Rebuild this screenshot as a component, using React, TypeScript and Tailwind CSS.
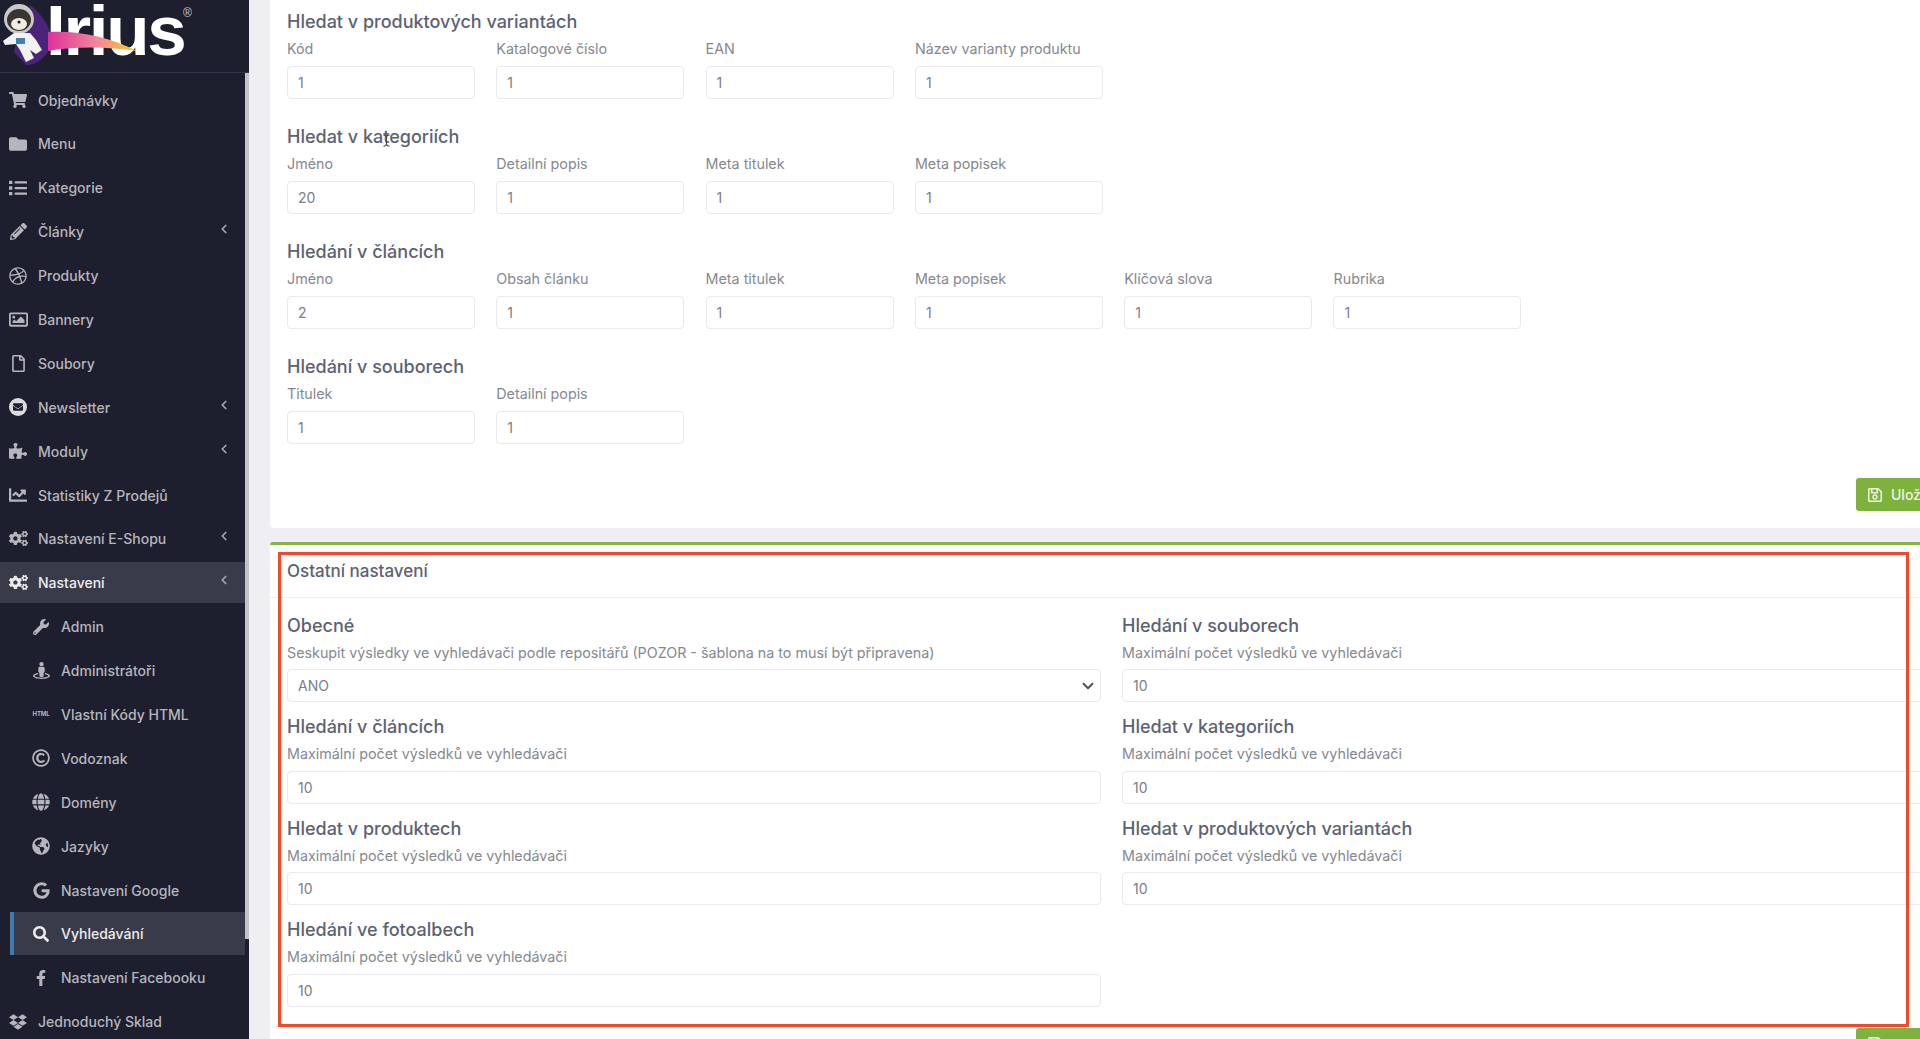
import React from "react";
import { ChevronLeft, ChevronDown, TextCursor } from "lucide-react";
import {
  FaShoppingCart,
  FaFolder,
  FaList,
  FaPencilAlt,
  FaDribbble,
  FaRegImage,
  FaRegFile,
  FaPuzzlePiece,
  FaChartLine,
  FaCogs,
  FaWrench,
  FaStreetView,
  FaRegCopyright,
  FaGlobe,
  FaGlobeAmericas,
  FaGoogle,
  FaSearch,
  FaFacebookF,
  FaDropbox,
  FaRegSave,
  FaEnvelope,
} from "react-icons/fa";

const FONT = "font-['Inter','Noto_Sans',sans-serif]";

type MenuItem = {
  label: string;
  icon: React.ReactNode;
  arrow?: boolean;
  sub?: boolean;
  active?: boolean;
  current?: boolean;
};

const MENU: MenuItem[] = [
  { label: "Objednávky", icon: <FaShoppingCart size={18} /> },
  { label: "Menu", icon: <FaFolder size={18} /> },
  { label: "Kategorie", icon: <FaList size={18} /> },
  { label: "Články", icon: <FaPencilAlt size={17} />, arrow: true },
  { label: "Produkty", icon: <FaDribbble size={18} /> },
  { label: "Bannery", icon: <FaRegImage size={19} /> },
  { label: "Soubory", icon: <FaRegFile size={17} /> },
  {
    label: "Newsletter",
    icon: (
      <span className="flex h-[18px] w-[18px] items-center justify-center rounded-full bg-[#dcdcdf] text-[#1e1f2e]">
        <FaEnvelope size={10} />
      </span>
    ),
    arrow: true,
  },
  { label: "Moduly", icon: <FaPuzzlePiece size={18} />, arrow: true },
  { label: "Statistiky Z Prodejů", icon: <FaChartLine size={18} /> },
  { label: "Nastavení E-Shopu", icon: <FaCogs size={19} />, arrow: true },
  { label: "Nastavení", icon: <FaCogs size={19} />, arrow: true, active: true },
  { label: "Admin", icon: <FaWrench size={16} />, sub: true },
  { label: "Administrátoři", icon: <FaStreetView size={17} />, sub: true },
  {
    label: "Vlastní Kódy HTML",
    icon: <span className="text-[6px] font-bold leading-none tracking-tight">HTML</span>,
    sub: true,
  },
  { label: "Vodoznak", icon: <FaRegCopyright size={18} />, sub: true },
  { label: "Domény", icon: <FaGlobe size={18} />, sub: true },
  { label: "Jazyky", icon: <FaGlobeAmericas size={18} />, sub: true },
  { label: "Nastavení Google", icon: <FaGoogle size={17} />, sub: true },
  { label: "Vyhledávání", icon: <FaSearch size={16} />, sub: true, current: true },
  { label: "Nastavení Facebooku", icon: <FaFacebookF size={16} />, sub: true },
  { label: "Jednoduchý Sklad", icon: <FaDropbox size={18} /> },
];

const TOP_SECTIONS = [
  {
    title: "Hledat v produktových variantách",
    fields: [
      ["Kód", "1"],
      ["Katalogové číslo", "1"],
      ["EAN", "1"],
      ["Název varianty produktu", "1"],
    ],
  },
  {
    title: "Hledat v kategoriích",
    fields: [
      ["Jméno", "20"],
      ["Detailní popis", "1"],
      ["Meta titulek", "1"],
      ["Meta popisek", "1"],
    ],
  },
  {
    title: "Hledání v článcích",
    fields: [
      ["Jméno", "2"],
      ["Obsah článku", "1"],
      ["Meta titulek", "1"],
      ["Meta popisek", "1"],
      ["Klíčová slova", "1"],
      ["Rubrika", "1"],
    ],
  },
  {
    title: "Hledání v souborech",
    fields: [
      ["Titulek", "1"],
      ["Detailní popis", "1"],
    ],
  },
];

const LIMIT_LABEL = "Maximální počet výsledků ve vyhledávači";

const OTHER_SECTIONS = [
  { title: "Hledání v souborech" },
  { title: "Hledání v článcích" },
  { title: "Hledat v kategoriích" },
  { title: "Hledat v produktech" },
  { title: "Hledat v produktových variantách" },
  { title: "Hledání ve fotoalbech" },
];

function Logo() {
  return (
    <div className="relative h-[73px] border-b border-[#34354a]">
      <span className="absolute left-[46px] top-[1px] font-['Liberation_Sans',sans-serif] text-[71px] font-bold leading-[60px] tracking-[-2.3px] text-white">
        Irius
      </span>
      <span className="absolute left-[183px] top-[6px] font-['Liberation_Sans',sans-serif] text-[12px] leading-[14px] text-[#c9c9cf]">
        ®
      </span>
      <svg className="absolute left-0 top-0" width="150" height="72" viewBox="0 0 150 72">
        <defs>
          <linearGradient id="swoosh" x1="0" y1="0" x2="1" y2="0">
            <stop offset="0" stopColor="#e0309a" />
            <stop offset="0.55" stopColor="#f2879a" />
            <stop offset="1" stopColor="#f5d020" />
          </linearGradient>
        </defs>
        <path d="M30 5 C40 12 48 24 50 32 L48 52 C42 60 34 66 26 65 L14 52 L20 24 Z" fill="#4b2379" />
        <path d="M48 32 C76 30 108 36 137 51 C108 47 78 46 48 51 Z" fill="url(#swoosh)" />
        <circle cx="19" cy="19" r="15" fill="#c9c9c9" />
        <ellipse cx="19" cy="20" rx="12" ry="11" fill="#3a3530" />
        <ellipse cx="19" cy="24" rx="8" ry="6" fill="#f0ebe3" />
        <circle cx="19" cy="22" r="1.5" fill="#1a1a1a" />
        <path d="M3 41 L14 33 L30 33 L36 40 L42 50 L36 54 L30 50 L34 58 L26 62 L20 50 L16 44 L5 45 Z" fill="#f2f2f2" />
        <rect x="16" y="38" width="9" height="6" fill="#3d7fb8" />
      </svg>
    </div>
  );
}

function NavRow({ item }: { item: MenuItem }) {
  const shape = item.current
    ? "-mt-px mb-[1.9px] ml-[10px] h-[43px] border-l-[4px] border-[#3f7cac] bg-[#3a3b4a] pl-[16px] text-[#ececee]"
    : item.sub
      ? "mb-[2.9px] h-[41px] pl-[30px]"
      : "mb-[2.9px] h-[41px] pl-[7px]";
  return (
    <div className={`relative flex shrink-0 items-center font-medium ${shape} ${item.active ? "bg-[#3a3b4a] text-[#ececee]" : ""}`}>
      <span className="-ml-[2px] flex w-[26px] shrink-0 items-center justify-center">{item.icon}</span>
      <span className="ml-[7px] whitespace-nowrap">{item.label}</span>
      {item.arrow && <ChevronLeft className="absolute left-[217px] top-[11px] text-[#a6a7ae]" size={14} strokeWidth={3} />}
    </div>
  );
}

function Sidebar() {
  return (
    <aside className="flex h-full w-[249px] shrink-0 flex-col overflow-hidden bg-[#1e1f2e] text-[14px] text-[#b5b6bc]">
      <Logo />
      <div className="flex min-h-0 flex-1">
        <nav className="flex w-[245px] shrink-0 flex-col pt-[6.5px]">
          {MENU.map((item) => (
            <NavRow key={item.label} item={item} />
          ))}
        </nav>
        <div className="h-[866px] w-[4px] bg-[#c4c4c9]" />
      </div>
    </aside>
  );
}

function TextInput({ value, full }: { value: string; full?: boolean }) {
  return (
    <input
      readOnly
      value={value}
      className={`${full ? "w-full" : "w-[188px]"} h-[33px] rounded-[4px] border border-[#e9e9ef] bg-white px-[10px] text-[14px] text-[#7b7e86] outline-none`}
    />
  );
}

function SaveButton() {
  return (
    <div className="flex justify-end">
      <div className="flex h-[33px] w-[80px] items-center gap-[8px] rounded-[3px] bg-[#7fb23d] pl-[11px] text-[14px] font-medium text-[#eef5e2]">
        <FaRegSave size={16} className="shrink-0" />
        <span>Uložit</span>
      </div>
    </div>
  );
}

function FieldGroup({ title, fields }: { title: string; fields: string[][] }) {
  return (
    <section className="mb-[24px]">
      <h3 className="h-[26px] pt-[1px] text-[18px] font-medium leading-[26px] text-[#5c6272]">{title}</h3>
      <div className="mt-[5px] flex gap-[21.3px]">
        {fields.map(([label, value]) => (
          <div key={label} className="w-[188px]">
            <div className="h-[20px] whitespace-nowrap text-[14.3px] leading-[20px] text-[#85888f]">{label}</div>
            <div className="mt-[7px]">
              <TextInput value={value} />
            </div>
          </div>
        ))}
      </div>
    </section>
  );
}

function LimitGroup({ title, label, children }: { title: string; label: string; children: React.ReactNode }) {
  return (
    <section>
      <h3 className="h-[26px] pt-[1.5px] text-[18px] font-medium leading-[26px] text-[#5c6272]">{title}</h3>
      <div className="mt-[5px] h-[20px] whitespace-nowrap pt-[0.5px] text-[14.3px] leading-[20px] text-[#85888f]">{label}</div>
      <div className="mt-[7px]">{children}</div>
    </section>
  );
}

export default function App() {
  return (
    <div className={`relative flex h-[1039px] w-[1920px] overflow-hidden bg-[#eeeef3] ${FONT}`}>
      <Sidebar />
      <main className="min-w-0 flex-1 pl-[21px]">
        {/* search weights */}
        <div className="flow-root w-[1683px] rounded-b-[4px] bg-white px-[17px] pb-[17px] pt-[8px]">
          {TOP_SECTIONS.map((s) => (
            <FieldGroup key={s.title} title={s.title} fields={s.fields} />
          ))}
          <div className="pt-[10px]">
            <SaveButton />
          </div>
        </div>

        {/* other settings */}
        <div className="mt-[14px] w-[1683px] rounded-t-[3px] border-t-[3px] border-[#86b347] bg-white">
          <div className="flex h-[53px] items-center border-b border-[#eeeef1] px-[17px] pt-[2px] text-[17px] font-medium text-[#5c6272]">
            Ostatní nastavení
          </div>
          <div className="px-[17px] pt-[13px]">
            <div className="grid grid-cols-2 gap-x-[21px] gap-y-[10.5px]">
              <LimitGroup
                title="Obecné"
                label="Seskupit výsledky ve vyhledávači podle repositářů (POZOR - šablona na to musí být připravena)"
              >
                <div className="relative flex h-[33px] items-center rounded-[4px] border border-[#e9e9ef] px-[10px] text-[14px] text-[#7b7e86]">
                  ANO
                  <ChevronDown className="absolute right-[3px] top-[7px] text-[#4b4f5c]" size={18} strokeWidth={2.5} />
                </div>
              </LimitGroup>
              {OTHER_SECTIONS.map((s) => (
                <LimitGroup key={s.title} title={s.title} label={LIMIT_LABEL}>
                  <TextInput value="10" full />
                </LimitGroup>
              ))}
            </div>
            <div className="mt-[21px]">
              <SaveButton />
            </div>
          </div>
        </div>
      </main>

      {/* red annotation frame + mouse cursor from the capture */}
      <div className="pointer-events-none absolute left-[278px] top-[552px] h-[475px] w-[1631px] border-[3px] border-[#ef4a2c]" />
      <TextCursor className="pointer-events-none absolute left-[380px] top-[134px] text-[#4a4d58]" size={13} />
    </div>
  );
}
